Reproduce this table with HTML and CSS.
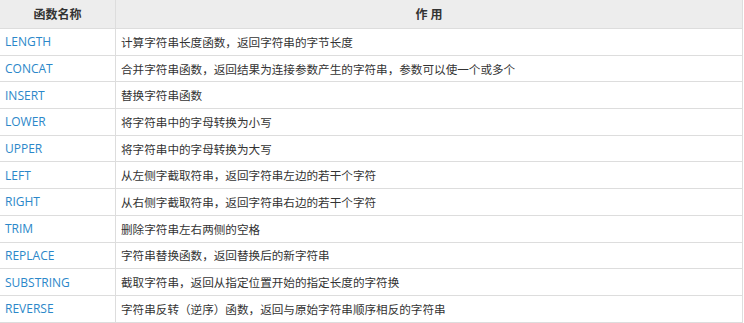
FILE: index.html
```html
<!DOCTYPE html>
<html lang="zh-CN">
<head>
<meta charset="utf-8">
<title>字符串函数</title>
<link rel="stylesheet" href="styles.css">
</head>
<body>
<table class="fn-table">
  <thead>
    <tr><th class="col-name">函数名称</th><th class="col-desc">作 用</th></tr>
  </thead>
  <tbody>
    <tr><td class="fn">LENGTH</td><td class="desc">计算字符串长度函数，返回字符串的字节长度</td></tr>
    <tr><td class="fn">CONCAT</td><td class="desc">合并字符串函数，返回结果为连接参数产生的字符串，参数可以使一个或多个</td></tr>
    <tr><td class="fn">INSERT</td><td class="desc">替换字符串函数</td></tr>
    <tr><td class="fn">LOWER</td><td class="desc">将字符串中的字母转换为小写</td></tr>
    <tr><td class="fn">UPPER</td><td class="desc">将字符串中的字母转换为大写</td></tr>
    <tr><td class="fn">LEFT</td><td class="desc">从左侧字截取符串，返回字符串左边的若干个字符</td></tr>
    <tr><td class="fn">RIGHT</td><td class="desc">从右侧字截取符串，返回字符串右边的若干个字符</td></tr>
    <tr><td class="fn">TRIM</td><td class="desc">删除字符串左右两侧的空格</td></tr>
    <tr><td class="fn">REPLACE</td><td class="desc">字符串替换函数，返回替换后的新字符串</td></tr>
    <tr><td class="fn">SUBSTRING</td><td class="desc">截取字符串，返回从指定位置开始的指定长度的字符换</td></tr>
    <tr><td class="fn">REVERSE</td><td class="desc">字符串反转（逆序）函数，返回与原始字符串顺序相反的字符串</td></tr>
  </tbody>
</table>
</body>
</html>
```
FILE: styles.css
```css
html, body {
  margin: 0;
  padding: 0;
  background: #ffffff;
}
body {
  font-family: "Open Sans", "Noto Sans CJK SC", sans-serif;
  font-size: 12px;
  color: #333333;
}
.fn-table {
  border-collapse: collapse;
  width: 743px;
  table-layout: fixed;
}
.fn-table th,
.fn-table td {
  border: 1px solid #dddddd;
  padding: 0 0 0 5px;
  text-align: left;
  white-space: nowrap;
}
.fn-table th:first-child,
.fn-table td:first-child {
  border-left: none;
}
.fn-table thead th {
  height: 28px;
  background: #ededed;
  font-weight: bold;
  text-align: center;
  padding: 0;
  color: #333333;
  border-top: none;
}
.col-name { width: 115px; }
.fn-table tbody td {
  height: 25.7px;
}
.fn-table td.fn {
  color: #2b87c9;
  padding-left: 5px;
}
.fn-table td.desc {
  font-size: 11.6px;
  padding-left: 5px;
}
```
